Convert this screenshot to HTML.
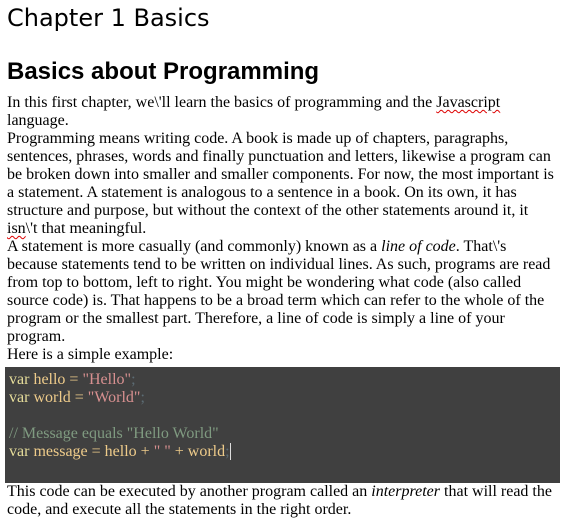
<!DOCTYPE html>
<html><head><style>
body{margin:0;padding:0 4px 0 7px;background:#fff;color:#000;font-family:"Liberation Serif",serif;font-size:16px;line-height:18px;width:553px;}
.ch{font-family:"DejaVu Sans",sans-serif;font-size:24px;line-height:30px;margin:3px 0 0 0;font-weight:normal}
h1{font-family:"Liberation Sans",sans-serif;font-size:24px;font-weight:bold;margin:25px 0 8px 0;line-height:28px}
p{margin:0}
.sq{text-decoration:underline wavy #d00;text-decoration-thickness:1px;text-underline-offset:2px}
pre{margin:3px 0 0 -2px;width:551px;background:#404040;font-family:"Liberation Serif",serif;font-size:16px;line-height:18px;padding:4px 0 22px 4px;color:#eecb8a;white-space:pre;}
.k{color:#e6dd9a}.s{color:#d89090}.c{color:#7f9a80}.p{color:#5c6c74}
.cur{border-right:1.5px solid #ddd}
</style></head><body>
<div class="ch">Chapter 1 Basics</div>
<h1>Basics about Programming</h1>
<p>In this first chapter, we\'ll learn the basics of programming and the <span class="sq">Javascript</span> language.</p>
<p>Programming means writing code. A book is made up of chapters, paragraphs, sentences, phrases, words and finally punctuation and letters, likewise a program can be broken down into smaller and smaller components. For now, the most important is a statement. A statement is analogous to a sentence in a book. On its own, it has structure and purpose, but without the context of the other statements around it, it <span class="sq">isn</span>\'t that meaningful.</p>
<p>A statement is more casually (and commonly) known as a <i>line of code</i>. That\'s because statements tend to be written on individual lines. As such, programs are read from top to bottom, left to right. You might be wondering what code (also called source code) is. That happens to be a broad term which can refer to the whole of the program or the smallest part. Therefore, a line of code is simply a line of your program.</p>
<p>Here is a simple example:</p>
<pre><span class="k">var</span> hello = <span class="s">"Hello"</span><span class="p">;</span>
<span class="k">var</span> world = <span class="s">"World"</span><span class="p">;</span>

<span class="c">// Message equals "Hello World"</span>
<span class="k">var</span> message = hello + <span class="s">" "</span> + world<span class="p cur">;</span></pre>
<p>This code can be executed by another program called an <i>interpreter</i> that will read the code, and execute all the statements in the right order.</p>
</body></html>
